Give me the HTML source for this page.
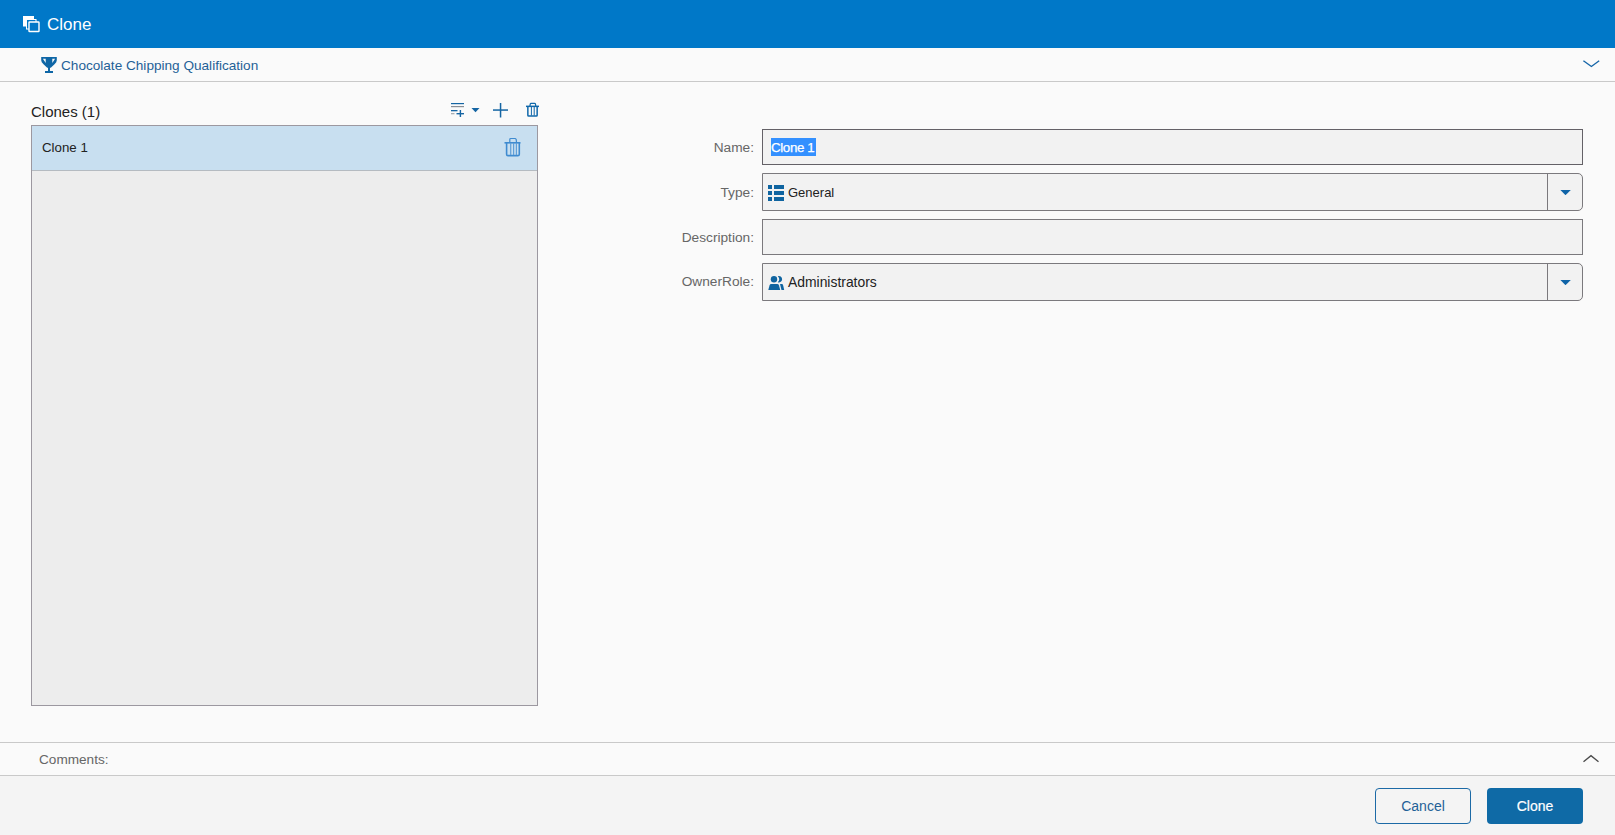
<!DOCTYPE html>
<html><head><meta charset="utf-8">
<style>
*{box-sizing:border-box;margin:0;padding:0}
html,body{width:1615px;height:835px;overflow:hidden;background:#fafafa;font-family:"Liberation Sans",sans-serif;color:#222}
.abs{position:absolute}
#hdr{left:0;top:0;width:1615px;height:48px;background:#0078c8}
#hdr .t{left:47px;top:15px;font-size:17px;color:#fff;line-height:20px}
#sub{left:0;top:48px;width:1615px;height:34px;background:#fafafa;border-bottom:1px solid #c9c9c9}
#sub .t{left:61px;top:57px;font-size:13px;color:#1f6197;line-height:16px}
.lbl{font-size:13.7px;color:#666;text-align:right;width:120px;line-height:16px}
.inp{left:762px;width:821px;background:#f2f2f2;border:1px solid #7b797d}
.dd{border-radius:0 5px 5px 0}
.dd .sep{position:absolute;right:34px;top:0;bottom:0;border-left:1px solid #7b797d}
.dd .arr{position:absolute;right:11px;top:15px;width:11px;height:6px}
.val{font-size:13px;color:#222;line-height:16px}
</style></head><body>
<div id="hdr" class="abs">
  <svg class="abs" style="left:20px;top:13px" width="23" height="22" viewBox="0 0 23 22">
    <rect x="3" y="3" width="11" height="10.5" fill="#fff"/>
    <rect x="6.5" y="6.5" width="9.5" height="9.5" fill="#0078c8" stroke="#fff" stroke-width="1"/>
    <rect x="9" y="9" width="10" height="9.5" rx="0.6" fill="#0078c8" stroke="#fff" stroke-width="1.4"/>
  </svg>
  <div class="abs t">Clone</div>
</div>
<div id="sub" class="abs"></div>
<svg class="abs" style="left:41px;top:57px" width="16" height="16" viewBox="0 0 16 16">
  <path fill-rule="evenodd" d="M0.2 0H15.8V3.2Q15.8 5 13.5 7.3L9.8 10.7H9V14H12V16H4V14H7V10.7H6.2L2.5 7.3Q0.2 5 0.2 3.2Z M1.9 1.7H4.7V6Z M14.1 1.7H11.3V6Z" fill="#0e66a6"/>
</svg>
<div class="abs" style="left:61px;top:58px;font-size:13.6px;color:#1f6197;line-height:16px">Chocolate Chipping Qualification</div>
<svg class="abs" style="left:1582px;top:58px" width="18" height="10" viewBox="0 0 18 10"><path d="M1.4 2.8L9.4 8.5L17.2 2.8" fill="none" stroke="#1565a8" stroke-width="1.4"/></svg>

<div class="abs" style="left:31px;top:103px;font-size:15px;color:#222;line-height:18px">Clones (1)</div>


<svg class="abs" style="left:448px;top:100px" width="36" height="20" viewBox="0 0 36 20">
  <rect x="3" y="3" width="13" height="1.2" fill="#1565a3"/>
  <rect x="3" y="6" width="13" height="1.2" fill="#8a8f96"/>
  <rect x="3" y="10" width="6.5" height="1.3" fill="#1565a3"/>
  <rect x="3" y="13" width="3.5" height="1.3" fill="#a9adb2"/>
  <rect x="8.5" y="13" width="7.5" height="1.4" fill="#1565a3"/>
  <rect x="11.7" y="10" width="1.4" height="7" fill="#1565a3"/>
  <path d="M23.5 8H31.5L27.5 12.3Z" fill="#1565a3"/>
</svg>
<svg class="abs" style="left:490px;top:100px" width="20" height="20" viewBox="0 0 20 20">
  <rect x="3" y="9.3" width="15" height="1.5" fill="#1565a3"/>
  <rect x="9.8" y="3" width="1.5" height="14.5" fill="#1565a3"/>
</svg>
<svg class="abs" style="left:522px;top:100px" width="20" height="20" viewBox="0 0 20 20">
  <path d="M7.9 6.2L8.3 3.9Q8.4 3.4 9 3.4H12.7Q13.3 3.4 13.4 3.9L13.8 6.2" fill="none" stroke="#1068aa" stroke-width="1.2"/>
  <rect x="4" y="5.6" width="13" height="1.5" fill="#1068aa"/>
  <path d="M5.85 6.8V15.2Q5.85 16.05 6.7 16.05H14.3Q15.15 16.05 15.15 15.2V6.8" fill="none" stroke="#1068aa" stroke-width="1.5"/>
  <rect x="8.9" y="7" width="1" height="8.5" fill="#1068aa"/>
  <rect x="11.7" y="7" width="1" height="8.5" fill="#1068aa"/>
</svg>
<div class="abs" style="left:31px;top:125px;width:507px;height:581px;background:#ededed;border:1px solid #9c98a0"></div>
<div class="abs" style="left:32px;top:126px;width:505px;height:45px;background:#c8dff0;border-bottom:1px solid #b5bbc1"></div>
<div class="abs" style="left:42px;top:140px;font-size:13.3px;color:#222;line-height:16px">Clone 1</div>


<svg class="abs" style="left:502px;top:136px" width="22" height="22" viewBox="0 0 22 22">
  <path d="M7.8 6.6V3.4C7.8 2.8 8.2 2.5 8.7 2.5H13C13.5 2.5 13.9 2.8 14.2 3.4L14.5 6.6" fill="none" stroke="#3f8bd0" stroke-width="1.2"/>
  <rect x="2.5" y="6" width="16" height="1.6" fill="#3f8bd0"/>
  <path d="M4.6 7V18.2C4.6 19 5.2 19.6 6 19.6H15.8C16.6 19.6 17.3 19 17.3 18.2V7" fill="none" stroke="#3f8bd0" stroke-width="1.6"/>
  <rect x="8.1" y="7.4" width="1.2" height="11.5" fill="#3f8bd0" opacity=".75"/>
  <rect x="11" y="7.4" width="1.2" height="11.5" fill="#3f8bd0" opacity=".75"/>
  <rect x="13.8" y="7.4" width="1.2" height="11.5" fill="#3f8bd0" opacity=".75"/>
</svg>
<div class="abs lbl" style="left:634px;top:140px">Name:</div>
<div class="abs lbl" style="left:634px;top:185px">Type:</div>
<div class="abs lbl" style="left:634px;top:230px">Description:</div>
<div class="abs lbl" style="left:634px;top:274px">OwnerRole:</div>

<div class="abs inp" style="top:129px;height:36px;border-color:#646167"></div>
<div class="abs" style="left:771px;top:138px;width:45px;height:18px;background:#3390ff;overflow:hidden"><div class="abs val" style="left:0;top:2px;color:#fff;font-size:13.3px;letter-spacing:-0.35px;-webkit-text-stroke:0.25px #fff;white-space:nowrap">Clone 1</div></div>

<div class="abs inp dd" style="top:173px;height:38px"><div class="sep"></div><svg class="arr" viewBox="0 0 11 6"><path d="M0.4 0.9H10.8L5.5 6.2Z" fill="#0f64a8"/></svg></div>
<svg class="abs" style="left:768px;top:185px" width="16" height="16" viewBox="0 0 16 16" shape-rendering="crispEdges">
  <rect x="0" y="0" width="4" height="4" fill="#0f64a0"/><rect x="6" y="0" width="10" height="4" fill="#0f64a0"/>
  <rect x="0" y="6" width="4" height="4" fill="#0f64a0"/><rect x="6" y="6" width="10" height="4" fill="#0f64a0"/>
  <rect x="0" y="12" width="4" height="4" fill="#0f64a0"/><rect x="6" y="12" width="10" height="4" fill="#0f64a0"/>
</svg>
<div class="abs val" style="left:788px;top:185px">General</div>

<div class="abs inp" style="top:219px;height:36px"></div>

<div class="abs inp dd" style="top:263px;height:38px"><div class="sep"></div><svg class="arr" viewBox="0 0 11 6"><path d="M0.4 0.9H10.8L5.5 6.2Z" fill="#0f64a8"/></svg></div>
<svg class="abs" style="left:767px;top:275px" width="18" height="16" viewBox="0 0 18 16">
  <circle cx="7" cy="4.2" r="3.2" fill="#0f64a0"/>
  <path d="M10.8 1.2A3.2 3.2 0 1 1 10.8 7.2A4.3 4.3 0 0 0 10.8 1.2Z" fill="#0f64a0"/>
  <path d="M1.3 15L2.5 10.4Q2.9 9 4.3 9H10.2Q11.6 9 12 10.4L13.2 15Z" fill="#0f64a0"/>
  <path d="M13.2 9H14.8Q15.9 9 16.2 10.4L17.2 15H14.5L13.1 9.6Z" fill="#0f64a0"/>
</svg>
<div class="abs val" style="left:788px;top:274px;font-size:13.9px">Administrators</div>

<div class="abs" style="left:0;top:742px;width:1615px;height:34px;border-top:1px solid #c9c9c9;border-bottom:1px solid #c9c9c9;background:#fafafa"></div>
<div class="abs" style="left:39px;top:752px;font-size:13.6px;color:#666;line-height:16px">Comments:</div>
<div class="abs" style="left:0;top:776px;width:1615px;height:59px;background:#f4f4f4"></div>

<svg class="abs" style="left:1580px;top:750px" width="22" height="16" viewBox="0 0 22 16"><path d="M3.5 11.8L11 5.7L18.5 11.8" fill="none" stroke="#4a4a4a" stroke-width="1.3"/></svg>
<div class="abs" style="left:1375px;top:788px;width:96px;height:36px;border:1px solid #1c6aa6;border-radius:4px;font-size:14px;color:#1f6197;text-align:center;line-height:34px">Cancel</div>
<div class="abs" style="left:1487px;top:788px;width:96px;height:36px;background:#0f6aa6;border-radius:4px;font-size:14px;color:#fff;text-align:center;line-height:36px;-webkit-text-stroke:0.2px #fff">Clone</div>
</body></html>
